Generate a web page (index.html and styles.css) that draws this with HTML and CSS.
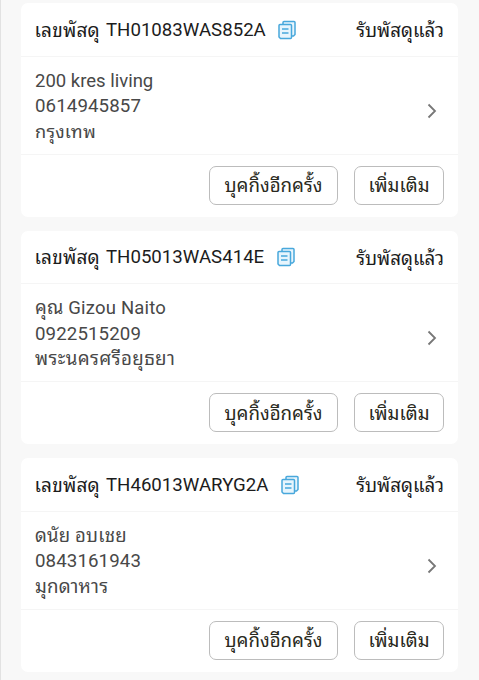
FILE: index.html
```html
<!DOCTYPE html>
<html lang="th"><head><meta charset="utf-8"><title>พัสดุ</title><link rel="stylesheet" href="styles.css"></head>
<body>
<main class="list">
<section class="card">
<header class="head"><span class="label">เลขพัสดุ</span><span class="code">TH01083WAS852A</span><svg class="copy" viewBox="0 0 18 20"><path class="sheet" d="M5 4V2.500Q5 1.500 6 1.500H16Q17 1.500 17 2.500V14.500L15.500 16H13.500"/><path class="sheet" d="M2 4.500H12.500Q13.500 4.500 13.500 5.500V17.500Q13.500 18.500 12.500 18.500H2.500L1 17V5.500Q1 4.500 2 4.500Z"/><path d="M4 9h6.500M4 13h6.500"/></svg><span class="status">รับพัสดุแล้ว</span></header>
<div class="body"><div class="info"><p>200 kres living</p><p class="phone">0614945857</p><p class="city capital">กรุงเทพ</p></div><svg class="chev" viewBox="0 0 10 16"><path d="M1.500 1.500L8 8l-6.500 6.500"/></svg></div>
<footer class="foot"><button class="btn again"><span>บุคกิ้งอีกครั้ง</span></button><button class="btn more"><span>เพิ่มเติม</span></button></footer>
</section>
<section class="card">
<header class="head"><span class="label">เลขพัสดุ</span><span class="code">TH05013WAS414E</span><svg class="copy" viewBox="0 0 18 20"><path class="sheet" d="M5 4V2.500Q5 1.500 6 1.500H16Q17 1.500 17 2.500V14.500L15.500 16H13.500"/><path class="sheet" d="M2 4.500H12.500Q13.500 4.500 13.500 5.500V17.500Q13.500 18.500 12.500 18.500H2.500L1 17V5.500Q1 4.500 2 4.500Z"/><path d="M4 9h6.500M4 13h6.500"/></svg><span class="status">รับพัสดุแล้ว</span></header>
<div class="body"><div class="info"><p class="name">คุณ Gizou Naito</p><p class="phone">0922515209</p><p class="city province">พระนครศรีอยุธยา</p></div><svg class="chev" viewBox="0 0 10 16"><path d="M1.500 1.500L8 8l-6.500 6.500"/></svg></div>
<footer class="foot"><button class="btn again"><span>บุคกิ้งอีกครั้ง</span></button><button class="btn more"><span>เพิ่มเติม</span></button></footer>
</section>
<section class="card">
<header class="head"><span class="label">เลขพัสดุ</span><span class="code">TH46013WARYG2A</span><svg class="copy" viewBox="0 0 18 20"><path class="sheet" d="M5 4V2.500Q5 1.500 6 1.500H16Q17 1.500 17 2.500V14.500L15.500 16H13.500"/><path class="sheet" d="M2 4.500H12.500Q13.500 4.500 13.500 5.500V17.500Q13.500 18.500 12.500 18.500H2.500L1 17V5.500Q1 4.500 2 4.500Z"/><path d="M4 9h6.500M4 13h6.500"/></svg><span class="status">รับพัสดุแล้ว</span></header>
<div class="body"><div class="info"><p class="name">ดนัย อบเชย</p><p class="phone">0843161943</p><p class="city">มุกดาหาร</p></div><svg class="chev" viewBox="0 0 10 16"><path d="M1.500 1.500L8 8l-6.500 6.500"/></svg></div>
<footer class="foot"><button class="btn again"><span>บุคกิ้งอีกครั้ง</span></button><button class="btn more"><span>เพิ่มเติม</span></button></footer>
</section>
</main>
</body></html>
```
FILE: styles.css
```css
* { box-sizing: border-box; }
body { margin: 0; height: 680px; overflow: hidden; background: #f8f8f8; border-left: 1px solid #e2e2e2; color: #1c1c1c; font-family: Roboto, "Noto Sans Thai Looped", "Noto Looped Thai", "Droid Sans Thai", Loma, Garuda, Waree, Umpush, sans-serif; }
.list { display: grid; gap: 14px; padding: 3px 21px 0 20px; }
.card { height: 213.5px; background: #fff; border-radius: 7px; }
.head { display: flex; align-items: center; height: 53.5px; padding: 1px 14px 0; border-bottom: 1px solid #f5f5f5; font-size: 18px; white-space: nowrap; }
.label { width: 71px; margin-left: -.5px; margin-right: .5px; padding-bottom: 3px; font-size: 19px; letter-spacing: .2px; }
.code { font-size: 18.65px; }
.copy { width: 18px; height: 20px; margin-left: 12.5px; fill: none; stroke: #48a8dc; stroke-width: 1.5; stroke-linejoin: round; }
.sheet { fill: #e7f5fd; }
.status { margin-left: auto; padding-bottom: 1px; font-size: 18.7px; }
.body { display: flex; align-items: center; justify-content: space-between; height: 98px; padding: 2px 21.5px 0 14px; border-bottom: 1px solid #f5f5f5; }
.info { font-size: 18.5px; color: #484848; white-space: nowrap; }
.info p { margin: 0; height: 25.5px; line-height: 27px; }
.info .name { letter-spacing: .2px; }
.info .phone { font-size: 18.7px; letter-spacing: .1px; }
.info .city { line-height: 26.5px; font-size: 18.7px; letter-spacing: .2px; }
.info .capital { font-size: 18.2px; }
.info .province { letter-spacing: .42px; }
.chev { width: 10px; height: 16px; margin-top: 9px; fill: none; stroke: #777; stroke-width: 1.8; }
.foot { display: flex; justify-content: flex-end; gap: 16px; padding: 11px 14px; }
.btn { height: 39px; padding: 0 0 2px; border: 1.500px solid #bcbcbc; border-radius: 7px; background: #fff; color: #292920; font: inherit; font-size: 18.7px; white-space: nowrap; }
.again { width: 129px; }
.more { width: 90px; }
```
